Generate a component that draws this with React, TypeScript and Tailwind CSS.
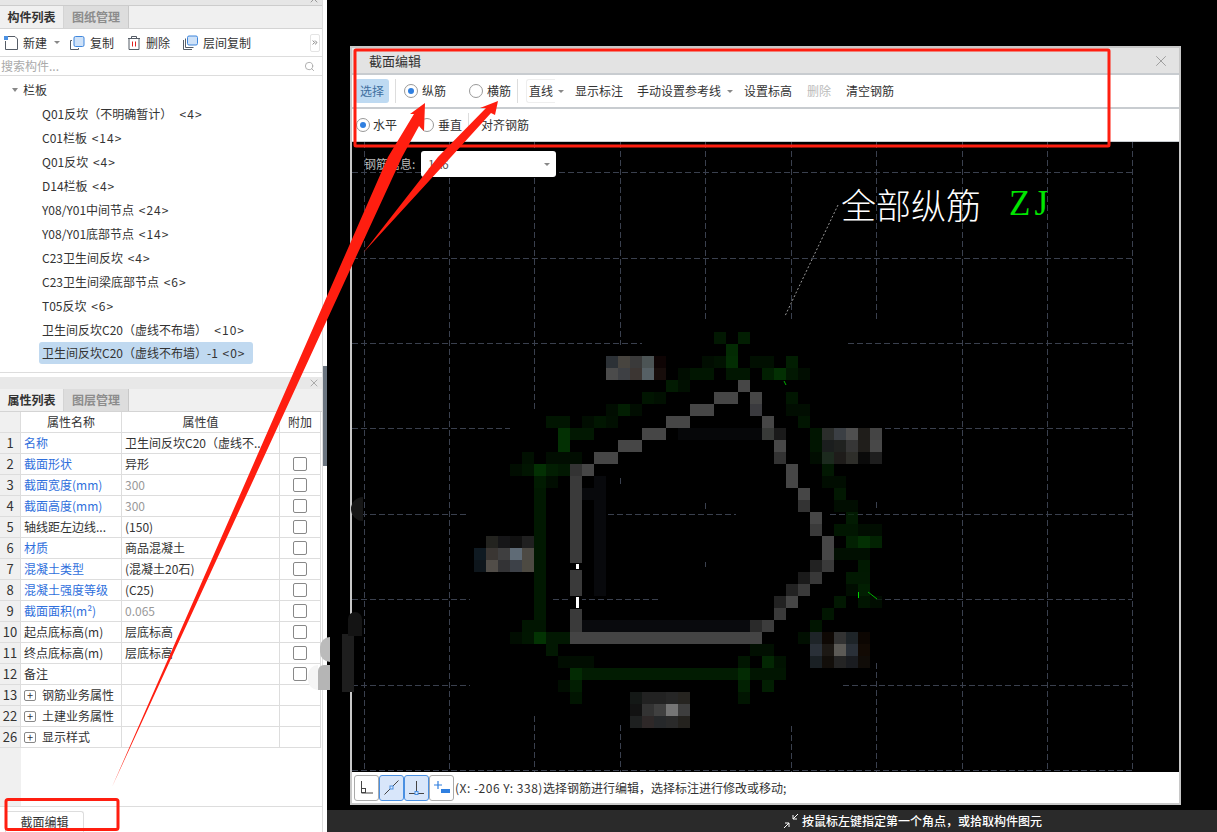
import React from 'react';
import { X, Search, ChevronsRight } from 'lucide-react';

type Cell = [number, number, string];

const cells: Cell[] = [];
function run(r: number, c0: number, colors: string[]) {
  colors.forEach((color, i) => cells.push([c0 + i, r, color]));
}
function fill(r: number, c0: number, c1: number, color: string) {
  for (let c = c0; c <= c1; c++) cells.push([c, r, color]);
}

// green mosaic
const G1 = '#021202';
const G2 = '#021e02';
const G3 = '#032803';
const G4 = '#044004';
run(1, 20, ['#032003']);
run(1, 22, ['#032803']);
run(2, 21, ['#043804']);
run(3, 19, [G1, '#021802', '#043c04']);
run(3, 23, ['#021402', '#021402']);
run(3, 26, [G3]);
run(4, 17, [G1, G2, G2]);
run(4, 21, [G2, G2]);
run(4, 24, ['#022a02', G4, '#032003', G1]);
run(5, 16, ['#032403', '#021402']);
run(6, 14, ['#021c02', '#021602']);
run(6, 26, [G2]);
run(7, 11, [G1, G3, G1]);
run(7, 26, [G1, G1]);
run(8, 6, ['#021c02', '#021c02']);
run(8, 9, [G1, G2, '#021402']);
run(8, 27, ['#021c02']);
run(9, 7, [G4, '#032003', '#032003']);
run(9, 28, ['#021c02']);
run(10, 7, [G4]);
run(10, 28, ['#021c02']);
run(11, 4, ['#021602']);
run(11, 6, [G1, G1, G1]);
run(11, 28, [G1]);
run(12, 3, [G1, '#021c02', G4, G3, '#032003']);
run(12, 29, ['#032003']);
run(13, 5, ['#022402', G1]);
run(13, 29, [G1, G1]);
for (let r = 14; r <= 24; r++) run(r, 5, ['#022002']);
run(14, 30, ['#032003']);
run(15, 30, [G1, G1]);
run(16, 31, ['#032403']);
run(17, 30, [G2, G2, G1, G1]);
run(18, 31, ['#032c03', G4, '#032e03']);
run(19, 30, ['#021402', '#021402', '#021402']);
run(20, 32, ['#022202']);
run(21, 31, ['#032203', '#032203']);
run(22, 31, [G1, '#032a03']);
run(23, 30, ['#032003']);
run(23, 32, ['#021c02', G1]);
run(24, 29, [G2]);
run(25, 4, ['#021c02', '#021c02']);
run(25, 28, ['#021c02']);
run(26, 3, [G1, G2, '#044404', '#032003', '#032003']);
run(26, 27, ['#021402']);
run(27, 6, ['#032003']);
run(27, 23, ['#021402', '#021402']);
run(28, 7, [G1, G1, G1]);
run(28, 22, [G2]);
run(28, 24, ['#043404', '#021802']);
run(29, 8, ['#043a04']);
fill(29, 9, 21, '#032603');
run(29, 22, ['#043a04', '#021c02', '#021c02', '#021c02']);
run(30, 7, [G1, G3]);
run(30, 22, ['#032c03']);
run(30, 24, [G3]);
run(31, 8, ['#021c02']);
run(31, 22, ['#021c02']);
const greenCount = cells.length;

// dim inner ring
for (let r = 13; r <= 22; r++) run(r, 10, ['#08090c']);
fill(25, 9, 22, '#090a0d');
fill(9, 17, 24, '#060709');
fill(14, 9, 10, '#08090c');

// gray outline of the section
const L = '#464646';
const M = '#3a3a3a';
run(5, 22, [L]);
run(6, 20, [L, L]);
run(6, 23, [L]);
run(7, 18, [L, L]);
run(7, 23, ['#3a3a3e']);
run(8, 16, [L, L]);
run(8, 24, [L]);
run(9, 14, [L, L]);
run(9, 24, ['#383a38', '#1a1a1a']);
run(10, 12, [L, L]);
run(10, 25, ['#484848']);
run(11, 10, [L, L]);
run(11, 25, ['#333333']);
run(12, 8, ['#333333', L]);
run(12, 26, [L]);
for (let r = 13; r <= 22; r++) run(r, 8, [M]);
for (let r = 24; r <= 25; r++) run(r, 8, [M]);
run(13, 26, [L]);
run(14, 27, [L]);
run(15, 27, ['#333333']);
run(16, 28, [L]);
run(17, 28, [M]);
run(18, 29, [L]);
run(19, 29, [L]);
run(20, 28, ['#222222', M]);
run(21, 27, ['#1a1a1a', '#383838']);
run(22, 26, ['#222222', M]);
run(23, 25, ['#222222', L]);
run(24, 25, [M]);
run(25, 23, ['#2a2a2a', '#3c3c3c']);
fill(26, 8, 23, '#444444');

// blurred blocks
run(3, 11, ['#2c3136', '#47443f', '#3a3a3a', '#4c5455', '#0e0404']);
run(4, 11, ['#4b4b4b', '#3e4044', '#3c3633', '#566065', '#170d0b']);
run(9, 29, ['#2b2d2b', '#3b3f44', '#4f4f4f', '#1f1d1a', '#444444']);
run(10, 29, ['#1b1e1e', '#202220', '#363636', '#201e1b', '#484848']);
run(11, 29, ['#1c2a1e', '#1e1c1a', '#2e2e2a', '#0a0a0a', '#1e1e1e']);
run(18, 1, ['#23231f', '#161618', '#111111', '#202020']);
run(19, 0, ['#0f1a22', '#3a3633', '#3f3f40', '#5f6b76', '#4d4a44']);
run(20, 0, ['#0e161c', '#514d48', '#333335', '#3d4148', '#4d4a42']);
run(26, 28, ['#1e2428', '#0e0804', '#333333', '#1e2428', '#0c0602']);
run(27, 28, ['#2a3038', '#1c1814', '#5c5a56', '#2a3038', '#120a04']);
run(28, 28, ['#1a2024', '#120e0a', '#242424', '#1a1c20', '#100c08']);
run(31, 13, ['#141816', '#222222', '#222222', '#262626', '#262420']);
run(32, 13, ['#121212', '#333333', '#404040', '#757575', '#3e3e3e']);
run(33, 13, ['#1e2020', '#2e2828', '#26282a', '#2a2a2a', '#24221e']);

const hLines: [number, number, number][] = [
  [172, 352, 1132],
  [258, 352, 1132],
  [343, 352, 642],
  [343, 848, 1132],
  [428, 352, 510],
  [428, 885, 1132],
  [514, 352, 468],
  [514, 608, 736],
  [514, 830, 1132],
  [599, 352, 470],
  [599, 553, 660],
  [599, 876, 1132],
  [685, 352, 470],
  [685, 843, 1132],
  [770, 352, 1132],
];
const vLines: [number, number, number][] = [
  [364, 142, 772],
  [449, 142, 772],
  [534, 142, 412],
  [534, 716, 772],
  [620, 142, 345],
  [620, 478, 486],
  [620, 725, 772],
  [705, 142, 320],
  [705, 503, 510],
  [705, 562, 567],
  [791, 142, 320],
  [791, 726, 772],
  [876, 142, 320],
  [876, 502, 510],
  [876, 663, 772],
  [962, 142, 772],
  [1047, 142, 772],
  [1132, 142, 772],
];

const treeRows: [string, string][] = [
  ['Q01反坎（不明确暂计）  ', '<4>'],
  ['C01栏板 ', '<14>'],
  ['Q01反坎 ', '<4>'],
  ['D14栏板 ', '<4>'],
  ['Y08/Y01中间节点 ', '<24>'],
  ['Y08/Y01底部节点 ', '<14>'],
  ['C23卫生间反坎 ', '<4>'],
  ['C23卫生间梁底部节点 ', '<6>'],
  ['T05反坎 ', '<6>'],
  ['卫生间反坎C20（虚线不布墙）  ', '<10>'],
];

const BLUE = 'text-[#2f6fdc]';
const GRAY = 'text-[#999999]';

const propRows: { n: number; name: string; value: string; nameCls?: string; valueCls?: string; check?: boolean; plus?: boolean }[] = [
  { n: 1, name: '名称', value: '卫生间反坎C20（虚线不...', nameCls: BLUE },
  { n: 2, name: '截面形状', value: '异形', nameCls: BLUE, check: true },
  { n: 3, name: '截面宽度(mm)', value: '300', nameCls: BLUE, valueCls: GRAY, check: true },
  { n: 4, name: '截面高度(mm)', value: '300', nameCls: BLUE, valueCls: GRAY, check: true },
  { n: 5, name: '轴线距左边线...', value: '(150)', check: true },
  { n: 6, name: '材质', value: '商品混凝土', nameCls: BLUE, check: true },
  { n: 7, name: '混凝土类型', value: '(混凝土20石)', nameCls: BLUE, check: true },
  { n: 8, name: '混凝土强度等级', value: '(C25)', nameCls: BLUE, check: true },
  { n: 9, name: '截面面积(m²)', value: '0.065', nameCls: BLUE, valueCls: GRAY, check: true },
  { n: 10, name: '起点底标高(m)', value: '层底标高', check: true },
  { n: 11, name: '终点底标高(m)', value: '层底标高', check: true },
  { n: 12, name: '备注', value: '', check: true },
  { n: 13, name: '钢筋业务属性', value: '', plus: true },
  { n: 22, name: '土建业务属性', value: '', plus: true },
  { n: 26, name: '显示样式', value: '', plus: true },
];

function Caret({ className = '' }: { className?: string }) {
  return <span className={`inline-block h-0 w-0 border-x-[3px] border-t-[3px] border-x-transparent border-t-[#888888] ${className}`} />;
}

function Radio({ checked }: { checked?: boolean }) {
  return (
    <span className="flex h-[14px] w-[14px] shrink-0 items-center justify-center rounded-full border border-[#999999] bg-white">
      {checked && <span className="h-[6px] w-[6px] rounded-full bg-[#2f7fe0]" />}
    </span>
  );
}

function PanelTabs({ active, other }: { active: string; other: string }) {
  return (
    <div className="flex h-[23px] shrink-0 border-b border-[#d4d4d4] bg-[#f0f0f0] text-[12px]">
      <div className="flex w-[64px] items-center justify-center border-r border-[#d4d4d4] font-bold text-[#333333]">{active}</div>
      <div className="flex w-[65px] items-center justify-center border-r border-[#c8c8c8] bg-[#dddddd] font-bold text-[#8c8c8c]">{other}</div>
    </div>
  );
}

function ToolIcon({ kind }: { kind: 'new' | 'copy' | 'trash' | 'floor' }) {
  if (kind === 'new') {
    return (
      <svg width="16" height="16" viewBox="0 0 16 16" fill="none">
        <path d="M5 1.5h7l2.5 2.5v10.5h-12V6" stroke="#555c66" />
        <rect x="1" y="1" width="4" height="4" fill="#4a90e2" />
      </svg>
    );
  }
  if (kind === 'copy') {
    return (
      <svg width="16" height="16" viewBox="0 0 16 16" fill="none">
        <path d="M3 5.5H1.5v9h8V13" stroke="#555c66" />
        <rect x="5" y="1.5" width="10" height="10" rx="1.5" fill="#cfe2f8" stroke="#3f86dc" />
      </svg>
    );
  }
  if (kind === 'trash') {
    return (
      <svg width="14" height="16" viewBox="0 0 14 16" fill="none">
        <path d="M1 3.5h12M4.5 3.5V1.5h5v2M2 3.5v11h10v-11" stroke="#555c66" />
        <path d="M5.5 6.5v5M8.5 6.5v5" stroke="#e02020" />
      </svg>
    );
  }
  return (
    <svg width="16" height="16" viewBox="0 0 16 16" fill="none">
      <path d="M1.5 5v9.5H10M3.5 3.5v9h8" stroke="#555c66" />
      <rect x="5.5" y="1" width="10" height="9" rx="1.5" fill="#cfe2f8" stroke="#3f86dc" />
    </svg>
  );
}

function LeftPanel() {
  return (
    <div className="flex h-full w-[327px] shrink-0 flex-col bg-white text-[12px] text-[#333333]">
      <div className="flex h-full w-[323px] flex-col border-r border-[#dddddd]">
        <div className="flex h-[6px] shrink-0 justify-end overflow-hidden border-b border-[#cccccc] bg-[#e6e6e6] pr-[1px]">
          <X size={12} className="-mt-[7px] mr-[1px] text-[#999999]" />
        </div>
        <PanelTabs active="构件列表" other="图纸管理" />
        <div className="flex h-[28px] shrink-0 items-center border-b border-[#dddddd]">
          <div className="ml-[3px] flex items-center gap-[4px]">
            <ToolIcon kind="new" />
            <span>新建</span>
          </div>
          <Caret className="ml-[7px]" />
          <div className="ml-[9px] flex items-center gap-[5px]">
            <ToolIcon kind="copy" />
            <span>复制</span>
          </div>
          <div className="ml-[13px] flex items-center gap-[5px]">
            <ToolIcon kind="trash" />
            <span>删除</span>
          </div>
          <div className="ml-[12px] flex items-center gap-[5px]">
            <ToolIcon kind="floor" />
            <span>层间复制</span>
          </div>
          <div className="ml-auto mr-[2px] flex h-[18px] w-[10px] items-center justify-center rounded-[2px] border border-[#e4e4e4] bg-white">
            <ChevronsRight size={9} className="text-[#444444]" />
          </div>
        </div>
        <div className="flex h-[19px] shrink-0 items-center justify-between border-b border-[#dddddd] pl-[1px] pr-[7px]">
          <span className="text-[#aaaaaa]">搜索构件...</span>
          <Search size={11} className="text-[#aaaaaa]" />
        </div>
        <div className="flex h-[297px] shrink-0 flex-col border-b border-[#dddddd] pt-[2px]">
          <div className="flex h-[24px] items-center pl-[12px]">
            <Caret className="mr-[5px] border-x-[3px] border-t-[4px]" />
            <span>栏板</span>
          </div>
          {treeRows.map(([name, count]) => (
            <div key={name} className="flex h-[24px] items-center whitespace-pre pl-[42px]">
              {name}
              <span className="ml-[2px] tracking-[1px]">{count}</span>
            </div>
          ))}
          <div className="ml-[39px] flex h-[22px] w-[214px] items-center whitespace-pre rounded-[3px] bg-[#c0d9f0] pl-[3px]">
            卫生间反坎C20（虚线不布墙）-1 <span className="ml-[2px] tracking-[1px]">{'<0>'}</span>
          </div>
        </div>
        <div className="h-[4px] shrink-0" />
        <div className="flex h-[12px] shrink-0 items-center justify-end overflow-hidden bg-[#e8e8e8] pr-[2px]">
          <X size={12} className="text-[#aaaaaa]" />
        </div>
        <PanelTabs active="属性列表" other="图层管理" />
        <div className="grid shrink-0 grid-cols-[21px_101px_158px_41px] auto-rows-[21px]">
          <div className="border-b border-r border-[#dddddd] bg-[#f0f0f0]" />
          <div className="flex items-center justify-center border-b border-r border-[#dddddd]">属性名称</div>
          <div className="flex items-center justify-center border-b border-r border-[#dddddd]">属性值</div>
          <div className="flex items-center justify-center border-b border-r border-[#dddddd]">附加</div>
          {propRows.map((row) => (
            <React.Fragment key={row.n}>
              <div className="flex items-center justify-center border-b border-r border-[#dddddd] bg-[#f0f0f0] text-[13px]">{row.n}</div>
              <div className={`flex items-center whitespace-nowrap border-b border-r border-[#dddddd] pl-[3px] ${row.nameCls ?? ''}`}>
                {row.plus && (
                  <span className="mr-[6px] flex h-[11px] w-[12px] items-center justify-center rounded-[2px] border border-[#888888] text-[11px] leading-none">+</span>
                )}
                {row.name}
              </div>
              <div className={`flex items-center whitespace-nowrap border-b border-r border-[#dddddd] pl-[3px] ${row.valueCls ?? ''}`}>{row.value}</div>
              <div className="flex items-center justify-center border-b border-r border-[#dddddd]">
                {row.check && <span className="h-[14px] w-[14px] rounded-[2px] border border-[#888888]" />}
              </div>
            </React.Fragment>
          ))}
        </div>
        <div className="min-h-0 flex-1">
          <div className="h-full w-[21px] bg-[#f0f0f0]" />
        </div>
        <div className="h-[26px] shrink-0 border-t border-[#dddddd] bg-white pl-[5px] pt-[4px]">
          <div className="flex h-[21px] w-[79px] items-center justify-center rounded-t-[3px] border-x border-t border-[#dddddd]">截面编辑</div>
        </div>
      </div>
    </div>
  );
}

function Drawing() {
  return (
    <svg className="absolute left-0 top-0 h-[630px] w-full" viewBox="352 142 827 630" shapeRendering="crispEdges">
      {hLines.map(([y, a, b]) => (
        <line key={`h${y}-${a}`} x1={a} x2={b} y1={y + 0.5} y2={y + 0.5} stroke="#3a404e" strokeDasharray="6 3" />
      ))}
      {vLines.map(([x, a, b]) => (
        <line key={`v${x}-${a}`} x1={x + 0.5} x2={x + 0.5} y1={a} y2={b} stroke="#3a404e" strokeDasharray="6 3" />
      ))}
      {cells.map(([c, r, color], i) => (
        <rect key={i} x={474 + 12 * c} y={320 + 12 * r} width={12} height={12} fill={color} opacity={i < greenCount ? 0.75 : 1} />
      ))}
      <rect x={570} y={563} width={12} height={7} fill="#000000" />
      <rect x={576} y={564} width={3} height={5} fill="#ffffff" />
      <rect x={570} y={596} width={12} height={13} fill="#000000" />
      <rect x={576} y={597} width={3} height={11} fill="#ffffff" />
      <line x1={858.5} x2={858.5} y1={592} y2={598} stroke="#00d000" />
      <line x1={868} x2={877} y1={592} y2={599} stroke="#00b000" shapeRendering="auto" />
      <line x1={784} x2={786} y1={381} y2={385} stroke="#00b000" shapeRendering="auto" />
      <line x1={838} x2={785} y1={205} y2={316} stroke="#9a9a9a" strokeDasharray="2 2" shapeRendering="auto" />
    </svg>
  );
}

function StatusButton({ active, children }: { active?: boolean; children: React.ReactNode }) {
  return (
    <div className={`flex h-[26px] w-[25px] items-center justify-center rounded-[3px] border ${active ? 'border-[#4a90e2] bg-[#d8e6fa]' : 'border-[#aaaaaa] bg-white'}`}>
      {children}
    </div>
  );
}

function SectionWindow() {
  return (
    <div className="ml-[23px] mt-[46px] flex h-[759px] w-[831px] shrink-0 flex-col border-2 border-[#c8c8c8] bg-white text-[12px] text-[#333333]">
      <div className="flex h-[25px] shrink-0 items-center justify-between bg-[#e3e3e3] pl-[17px] pr-[9px]">
        <span className="text-[13px]">截面编辑</span>
        <X size={18} strokeWidth={1} className="text-[#888888]" />
      </div>
      <div className="flex h-[36px] shrink-0 items-center border-y-2 border-[#c8ccd0] pl-[3px]">
        <div className="flex h-[24px] w-[34px] items-center justify-center rounded-[3px] bg-[#bedaf2] text-[#3f6f9f]">选择</div>
        <div className="ml-[6px] h-[24px] w-px bg-[#dddddd]" />
        <div className="ml-[8px]"><Radio checked /></div>
        <span className="ml-[4px]">纵筋</span>
        <div className="ml-[23px]"><Radio /></div>
        <span className="ml-[4px]">横筋</span>
        <div className="ml-[6px] h-[24px] w-px bg-[#dddddd]" />
        <div className="ml-[8px] flex h-[24px] w-[29px] items-center justify-center rounded-l-[3px] border-y border-l border-[#eeeeee]">直线</div>
        <Caret className="ml-[3px]" />
        <span className="ml-[11px]">显示标注</span>
        <span className="ml-[14px]">手动设置参考线</span>
        <Caret className="ml-[6px]" />
        <span className="ml-[11px]">设置标高</span>
        <span className="ml-[15px] text-[#bbbbbb]">删除</span>
        <span className="ml-[15px]">清空钢筋</span>
      </div>
      <div className="flex h-[33px] shrink-0 items-center border-b border-[#c8ccd0] pl-[4px]">
        <Radio checked />
        <span className="ml-[3px]">水平</span>
        <div className="ml-[23px]"><Radio /></div>
        <span className="ml-[4px]">垂直</span>
        <div className="ml-[6px] h-[24px] w-px bg-[#dddddd]" />
        <span className="ml-[12px]">对齐钢筋</span>
      </div>
      <div className="relative h-[630px] shrink-0 overflow-hidden bg-black">
        <Drawing />
        <div className="absolute left-[12px] top-[9px] flex h-[26px] items-center">
          <span className="w-[57px] text-[#bbbbbb]">钢筋信息:</span>
          <div className="flex h-[26px] w-[135px] items-center justify-between rounded-[3px] bg-white pl-[7px] pr-[6px] text-[#555555]">
            <span>1A6</span>
            <Caret />
          </div>
        </div>
        <div className="absolute left-[489px] top-[39px] text-[35px] font-light leading-[46px] text-white">全部纵筋</div>
        <div className="absolute left-[657px] top-[39px] font-['Liberation_Serif',serif] text-[35px] leading-[46px] tracking-[4px] text-[#00e600]">ZJ</div>
      </div>
      <div className="flex min-h-0 flex-1 items-center pl-[2px]">
        <StatusButton>
          <svg width="15" height="15" viewBox="0 0 15 15" fill="none"><path d="M2.5 1v12H14" stroke="#444444" /><rect x="2.5" y="8.5" width="4" height="4" stroke="#444444" /></svg>
        </StatusButton>
        <StatusButton active>
          <svg width="17" height="17" viewBox="0 0 17 17" fill="none"><path d="M1.5 15.5l14-14" stroke="#444444" /><rect x="7" y="7" width="3" height="3" fill="#d8e6fa" stroke="#4a90e2" /></svg>
        </StatusButton>
        <StatusButton active>
          <svg width="17" height="15" viewBox="0 0 17 15" fill="none"><path d="M8.5 1v12M1 13.5h15" stroke="#444444" /><rect x="7" y="11.5" width="3" height="3" fill="#d8e6fa" stroke="#4a90e2" /></svg>
        </StatusButton>
        <StatusButton>
          <svg width="18" height="16" viewBox="0 0 18 16" fill="none"><path d="M5 1v8M1 5h8" stroke="#2f7fe0" strokeWidth="1.2" /><rect x="8" y="9" width="9" height="4" fill="#2f7fe0" /></svg>
        </StatusButton>
        <span className="ml-[1px] whitespace-nowrap">
          <span className="tracking-[0.5px]">(X: -206 Y: 338)</span>选择钢筋进行编辑，选择标注进行修改或移动;
        </span>
      </div>
    </div>
  );
}

function Annotations() {
  return (
    <svg className="pointer-events-none absolute left-0 top-0" width="1217" height="832" viewBox="0 0 1217 832" fill="none">
      <rect x="355" y="50" width="754" height="96" rx="1" stroke="#ff1e10" strokeWidth="3" />
      <rect x="6" y="799.5" width="112" height="30" rx="2" stroke="#ff1e10" strokeWidth="3" />
      <polygon points="112,787 388,157 414,114 410,114 425,103 424,131 419,126 402,157" fill="#ff1e10" />
      <polygon points="363,253 438,157 486,108 480,108 498,101 495,115 491,113 451,157" fill="#ff1e10" />
    </svg>
  );
}

export default function App() {
  return (
    <div className="relative flex h-[832px] w-[1217px] overflow-hidden bg-black font-['Noto_Sans_CJK_SC','Liberation_Sans',sans-serif]">
      <LeftPanel />
      <div className="flex min-w-0 flex-1 flex-col">
        <SectionWindow />
        <div className="mt-[5px] flex h-[22px] shrink-0 items-center bg-[#2a2a2a] pl-[456px] text-[12px] font-medium text-white">
          <svg width="16" height="16" viewBox="0 0 16 16" fill="none" stroke="#ffffff" className="mr-[3px]">
            <path d="M1 15l5-5M2 10h4v4M15 1l-5 5M14 6h-4V2" />
          </svg>
          按鼠标左键指定第一个角点，或拾取构件图元
        </div>
      </div>
      <div className="absolute left-[323px] top-[366px] h-[100px] w-[4px] bg-[#6b7580]" />
      <div className="absolute left-[320px] top-[637px] h-[25px] w-[10px] rounded-l-full bg-[#bbbbbb]" />
      <div className="absolute left-[308px] top-[665px] h-[25px] w-[10px] rounded-l-full bg-[#f5f5f5]" />
      <div className="absolute left-[318px] top-[665px] h-[25px] w-[12px] rounded-tl-[6px] bg-[#b5b5b5]" />
      <div className="absolute left-[342px] top-[634px] h-[58px] w-[12px] bg-[#1e1e1e]" />
      <div className="absolute left-[348px] top-[612px] h-[24px] w-[14px] rounded-t-full bg-[#141414]" />
      <div className="absolute left-[351px] top-[497px] h-[24px] w-[12px] rounded-l-full bg-[#161616]" />
      <Annotations />
    </div>
  );
}
